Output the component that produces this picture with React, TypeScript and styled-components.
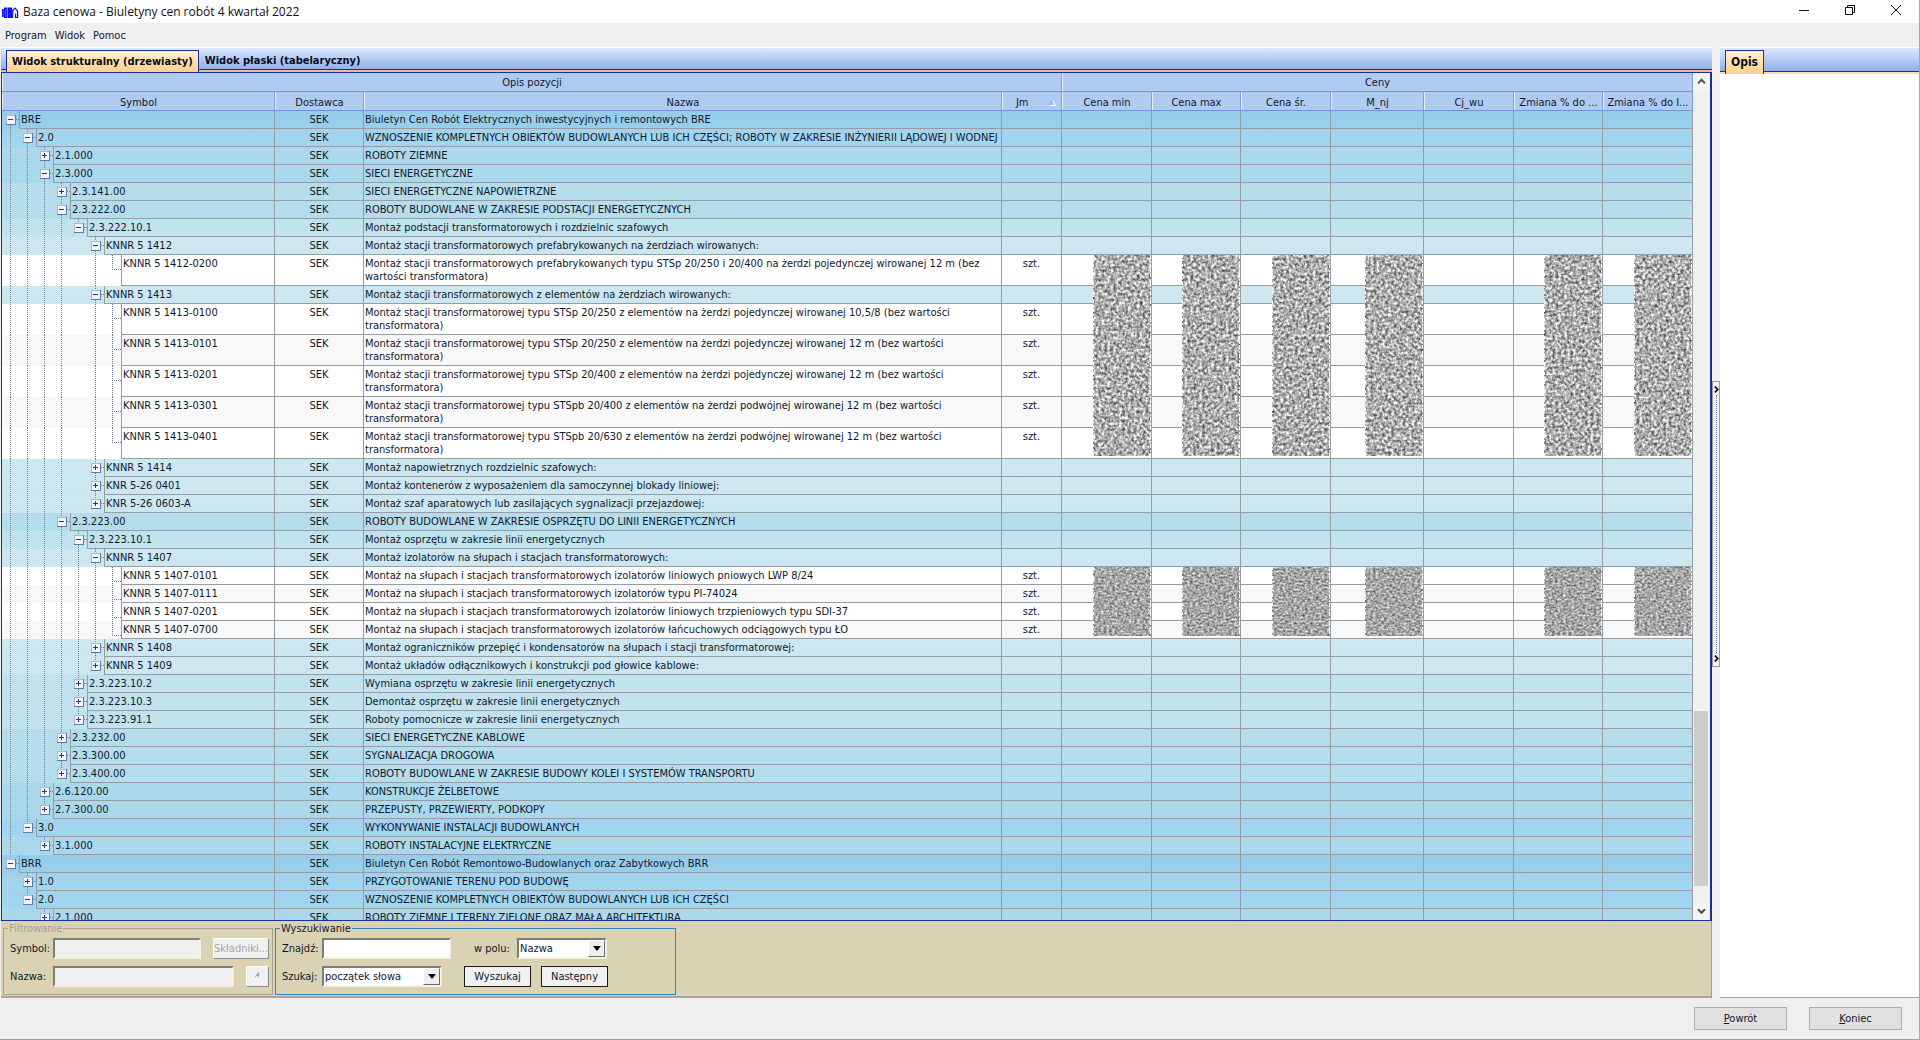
import React from 'react';
import styled, { createGlobalStyle } from 'styled-components';

const GlobalStyle = createGlobalStyle`
  *, *::before, *::after { box-sizing: border-box; }
  html, body { margin: 0; padding: 0; }
  body, button, input, select {
    font-family: 'DejaVu Sans Condensed', 'DejaVu Sans', sans-serif;
    font-size: 11px;
    line-height: 13px;
    color: #10182c;
  }
`;

const NAVY = '#1c2f94';
const GRID = '#949ca4';

/* ---------- window frame ---------- */

const Window = styled.div`
  display: flex;
  flex-direction: column;
  height: 100vh;
  overflow: hidden;
  background: #efefef;
  border-right: 1px solid #a8a8a8;
  border-bottom: 1px solid #a0a0a0;
`;

const TitleBar = styled.header`
  display: flex;
  align-items: center;
  height: 23px;
  padding-left: 2px;
  background: #fff;
`;

const Title = styled.h1`
  flex: 1;
  margin: 0 0 0 4px;
  font: 400 12px/16px 'Open Sans', sans-serif;
  color: #111;
`;

const WindowButton = styled.button`
  display: flex;
  align-items: center;
  justify-content: center;
  width: 46px;
  height: 23px;
  padding: 0 0 3px;
  border: 0;
  background: none;
`;

const MenuBar = styled.nav`
  display: flex;
  gap: 8px;
  height: 24px;
  padding: 6px 5px 0;
`;

const MenuItem = styled.button`
  height: 13px;
  padding: 0;
  border: 0;
  background: none;
`;

const Body = styled.main`
  display: flex;
  flex: 1;
  min-height: 0;
`;

const LeftPane = styled.section`
  display: flex;
  flex: 1;
  flex-direction: column;
  min-width: 0;
  margin-left: 1px;
`;

const RightPane = styled.aside`
  display: flex;
  flex-direction: column;
  width: 199px;
  border-bottom: 1px solid #a0a0a0;
  background: #fff;
`;

/* ---------- tabs ---------- */

const TabStrip = styled.div<{ $height: number; $band: string }>`
  display: flex;
  align-items: flex-end;
  height: ${(p) => p.$height}px;
  padding-left: 5px;
  border-top: 1px solid #fff;
  background: linear-gradient(#dce9fd, #85a8e6);
  box-shadow: inset 0 -2px 0 ${(p) => p.$band}, inset 0 -3px 0 ${NAVY};
`;

const Tab = styled.button<{ $active?: boolean; $large?: boolean }>`
  height: ${(p) => (p.$active ? 'calc(100% - 2px)' : '100%')};
  padding: 0 5px;
  border: 1px solid ${(p) => (p.$active ? NAVY : 'transparent')};
  border-bottom: 0;
  background: ${(p) => (p.$active ? 'linear-gradient(#fff1cf, #fdd08a)' : 'none')};
  font-size: ${(p) => (p.$large ? 12 : 11)}px;
  font-weight: 700;
  line-height: 15px;
  color: #0a0a18;
`;

/* ---------- price table ---------- */

const GridFrame = styled.div`
  display: flex;
  flex: 1;
  min-height: 0;
  border: 1px solid ${NAVY};
  border-right-width: 2px;
`;

const GridView = styled.div`
  flex: 1;
  min-width: 0;
  overflow: hidden;
`;

const Table = styled.table`
  width: 100%;
  border-spacing: 0;
  table-layout: fixed;
`;

const Col = styled.col<{ $width?: number }>`
  width: ${(p) => (p.$width ? `${p.$width}px` : 'auto')};
`;

const Th = styled.th`
  height: 19px;
  padding: 3px 2px 0;
  border-bottom: 1px solid #6f94da;
  background: #afcbf1;
  box-shadow: inset -1px 0 0 #7f9fdc, inset 1px 0 0 #e6effc;
  font-weight: 400;
  white-space: nowrap;

  &[colspan] { padding-top: 1px; }
`;

const SortHead = styled.span`
  display: flex;
  align-items: center;
  justify-content: space-between;
  padding: 0 4px 0 12px;
`;

const levelFill = [
  'linear-gradient(#94cceb, #98d0ea)',
  'linear-gradient(#a5d2ea, #9fd6f0 60%)',
  'linear-gradient(#aed8ea, #a8d8ed)',
  'linear-gradient(#b7dcec, #b2deec)',
  'linear-gradient(#bfe2ee, #c2e4ee)',
  'linear-gradient(#cde8f0, #cbe6ef)',
];

const Row = styled.tr<{ $level: number; $alt?: boolean }>`
  background: ${(p) => (p.$level < 6 ? levelFill[p.$level] : p.$alt ? '#f8f8f8' : '#fff')};
`;

const Td = styled.td<{ $align?: string }>`
  position: relative;
  height: 18px;
  padding: 2px 1px;
  border-right: 1px solid ${GRID};
  border-bottom: 1px solid ${GRID};
  text-align: ${(p) => p.$align ?? 'left'};
  vertical-align: top;
  white-space: pre-line;
`;

const SymbolTd = styled.td`
  height: 18px;
  padding: 0;
  border-right: 1px solid ${GRID};
`;

const SymbolLine = styled.div`
  display: flex;
  height: 100%;
`;

const Indent = styled.span<{ $level: number }>`
  position: relative;
  width: ${(p) => 17 + 17 * p.$level}px;
`;

const BranchSvg = styled.svg`
  position: absolute;
  inset: 0;
  width: 100%;
  height: 100%;
`;

const SymbolText = styled.span`
  flex: 1;
  padding: 2px 1px;
  border-left: 1px solid ${GRID};
  border-bottom: 1px solid ${GRID};
`;

const NoiseSvg = styled.svg`
  position: absolute;
  z-index: 1;
  top: 0;
  right: 0;
`;

const ScrollBar = styled.div`
  display: flex;
  flex-direction: column;
  width: 17px;
  background: #f0f0f0;
`;

const ScrollArrow = styled.button`
  display: flex;
  align-items: center;
  justify-content: center;
  width: 17px;
  height: 17px;
  padding: 0;
  border: 0;
  background: #f4f4f4;
`;

const ScrollTrack = styled.div`
  display: flex;
  flex: 1;
  flex-direction: column;
  justify-content: flex-end;
  padding: 0 2px 17px 1px;
`;

const ScrollThumb = styled.div`
  height: 22%;
  background: #cdcdcd;
`;

/* ---------- splitter ---------- */

const Splitter = styled.div`
  display: flex;
  flex-direction: column;
  width: 8px;
  padding: 334px 0 331px;
`;

const SplitterGrip = styled.button`
  display: flex;
  flex: 1;
  flex-direction: column;
  align-items: center;
  justify-content: space-between;
  width: 8px;
  padding: 4px 0;
  border: 1px solid #9a9a9a;
  background: #f4f6fa;
`;

const GripDots = styled.span`
  flex: 1;
  margin: 2px 0;
  border-left: 1px dotted #5a78b4;
`;

/* ---------- search panel ---------- */

const SearchPanel = styled.form`
  display: flex;
  gap: 2px;
  height: 77px;
  padding: 1px 0 1px 2px;
  border-right: 1px solid #a0a0a0;
  border-bottom: 2px solid #a6a6a2;
  background: #dad3b3;
`;

const Group = styled.fieldset<{ $line: string; $width: number }>`
  display: flex;
  flex-direction: column;
  gap: 7px;
  width: ${(p) => p.$width}px;
  min-width: 0;
  margin: 0;
  padding: 3px 3px 6px 6px;
  border: 1px solid ${(p) => p.$line};
`;

const Legend = styled.legend<{ $muted?: boolean }>`
  margin-left: -2px;
  padding: 0 1px;
  color: ${(p) => (p.$muted ? '#a5a08c' : '#10182c')};
`;

const FieldRow = styled.div`
  display: flex;
  align-items: center;
  height: 21px;
`;

const Label = styled.label<{ $width: number }>`
  width: ${(p) => p.$width}px;
  white-space: nowrap;
`;

const Input = styled.input<{ $width?: number }>`
  flex: ${(p) => (p.$width ? 'none' : 1)};
  width: ${(p) => (p.$width ? `${p.$width}px` : 'auto')};
  min-width: 0;
  height: 21px;
  padding: 1px 3px;
  border: 2px solid;
  border-color: #7c7c78 #f4f1e2 #f4f1e2 #7c7c78;
  background: #fff;

  &:disabled { background: #efefef; }
`;

const SelectBox = styled.span<{ $width: number }>`
  position: relative;
  display: flex;
  width: ${(p) => p.$width}px;
  height: 21px;
`;

const Select = styled.select`
  width: 100%;
  padding: 0 18px 0 1px;
  border: 2px solid;
  border-color: #7c7c78 #f4f1e2 #f4f1e2 #7c7c78;
  border-radius: 0;
  background: #fff;
  appearance: none;
`;

const DropMark = styled.span`
  position: absolute;
  top: 2px;
  right: 2px;
  display: flex;
  align-items: center;
  justify-content: center;
  width: 17px;
  height: 17px;
  border: 1px solid;
  border-color: #fff #6e6e6e #6e6e6e #fff;
  background: #efefef;
  pointer-events: none;
`;

const RaisedButton = styled.button<{ $width: number; $framed?: boolean }>`
  width: ${(p) => p.$width}px;
  height: 21px;
  margin-left: ${(p) => (p.$framed ? 10 : 12)}px;
  padding: 0;
  border: 1px solid;
  border-color: ${(p) => (p.$framed ? '#1c1c1c' : '#fff #8a8a86 #8a8a86 #fff')};
  background: #f0f0f0;

  &:disabled { color: #a6a6a6; }
`;

const Spacer = styled.span<{ $width: number }>`
  width: ${(p) => p.$width}px;
`;

const Footer = styled.footer`
  display: flex;
  justify-content: flex-end;
  gap: 22px;
  height: 41px;
  padding: 9px 17px 0 0;
`;

const FooterButton = styled.button`
  width: 93px;
  height: 23px;
  border: 1px solid #adadad;
  background: #e1e1e1;
`;

/* ---------- data ---------- */

type Node = { level: number; symbol: string; name: string; open?: boolean; alt?: boolean; mask?: number };

const L = (symbol: string, name: string, alt = false, mask?: number): Node => ({ level: 6, symbol, name, alt, mask });
const N = (level: number, symbol: string, name: string, open = false): Node => ({ level, symbol, name, open });

const rows: Node[] = [
  N(0, 'BRE', 'Biuletyn Cen Robót Elektrycznych inwestycyjnych i remontowych BRE', true),
  N(1, '2.0', 'WZNOSZENIE KOMPLETNYCH OBIEKTÓW BUDOWLANYCH LUB ICH CZĘŚCI; ROBOTY W ZAKRESIE INŻYNIERII LĄDOWEJ I WODNEJ', true),
  N(2, '2.1.000', 'ROBOTY ZIEMNE'),
  N(2, '2.3.000', 'SIECI ENERGETYCZNE', true),
  N(3, '2.3.141.00', 'SIECI ENERGETYCZNE NAPOWIETRZNE'),
  N(3, '2.3.222.00', 'ROBOTY BUDOWLANE W ZAKRESIE PODSTACJI ENERGETYCZNYCH', true),
  N(4, '2.3.222.10.1', 'Montaż podstacji transformatorowych i rozdzielnic szafowych', true),
  N(5, 'KNNR 5 1412', 'Montaż stacji transformatorowych prefabrykowanych na żerdziach wirowanych:', true),
  L('KNNR 5 1412-0200', 'Montaż stacji transformatorowych prefabrykowanych typu STSp 20/250 i 20/400 na żerdzi pojedynczej wirowanej 12 m (bez\nwartości transformatora)', false, 201),
  N(5, 'KNNR 5 1413', 'Montaż stacji transformatorowych z elementów na żerdziach wirowanych:', true),
  L('KNNR 5 1413-0100', 'Montaż stacji transformatorowej typu STSp 20/250 z elementów na żerdzi pojedynczej wirowanej 10,5/8 (bez wartości\ntransformatora)'),
  L('KNNR 5 1413-0101', 'Montaż stacji transformatorowej typu STSp 20/250 z elementów na żerdzi pojedynczej wirowanej 12 m (bez wartości\ntransformatora)', true),
  L('KNNR 5 1413-0201', 'Montaż stacji transformatorowej typu STSp 20/400 z elementów na żerdzi pojedynczej wirowanej 12 m (bez wartości\ntransformatora)'),
  L('KNNR 5 1413-0301', 'Montaż stacji transformatorowej typu STSpb 20/400 z elementów na żerdzi podwójnej wirowanej 12 m (bez wartości\ntransformatora)', true),
  L('KNNR 5 1413-0401', 'Montaż stacji transformatorowej typu STSpb 20/630 z elementów na żerdzi podwójnej wirowanej 12 m (bez wartości\ntransformatora)'),
  N(5, 'KNNR 5 1414', 'Montaż napowietrznych rozdzielnic szafowych:'),
  N(5, 'KNR 5-26 0401', 'Montaż kontenerów z wyposażeniem dla samoczynnej blokady liniowej:'),
  N(5, 'KNR 5-26 0603-A', 'Montaż szaf aparatowych lub zasilających sygnalizacji przejazdowej:'),
  N(3, '2.3.223.00', 'ROBOTY BUDOWLANE W ZAKRESIE OSPRZĘTU DO LINII ENERGETYCZNYCH', true),
  N(4, '2.3.223.10.1', 'Montaż osprzętu w zakresie linii energetycznych', true),
  N(5, 'KNNR 5 1407', 'Montaż izolatorów na słupach i stacjach transformatorowych:', true),
  L('KNNR 5 1407-0101', 'Montaż na słupach i stacjach transformatorowych izolatorów liniowych pniowych LWP 8/24', false, 69),
  L('KNNR 5 1407-0111', 'Montaż na słupach i stacjach transformatorowych izolatorów typu PI-74024', true),
  L('KNNR 5 1407-0201', 'Montaż na słupach i stacjach transformatorowych izolatorów liniowych trzpieniowych typu SDI-37'),
  L('KNNR 5 1407-0700', 'Montaż na słupach i stacjach transformatorowych izolatorów łańcuchowych odciągowych typu ŁO', true),
  N(5, 'KNNR 5 1408', 'Montaż ograniczników przepięć i kondensatorów na słupach i stacji transformatorowej:'),
  N(5, 'KNNR 5 1409', 'Montaż układów odłącznikowych i konstrukcji pod głowice kablowe:'),
  N(4, '2.3.223.10.2', 'Wymiana osprzętu w zakresie linii energetycznych'),
  N(4, '2.3.223.10.3', 'Demontaż osprzętu w zakresie linii energetycznych'),
  N(4, '2.3.223.91.1', 'Roboty pomocnicze w zakresie linii energetycznych'),
  N(3, '2.3.232.00', 'SIECI ENERGETYCZNE KABLOWE'),
  N(3, '2.3.300.00', 'SYGNALIZACJA DROGOWA'),
  N(3, '2.3.400.00', 'ROBOTY BUDOWLANE W ZAKRESIE BUDOWY KOLEI I SYSTEMÓW TRANSPORTU'),
  N(2, '2.6.120.00', 'KONSTRUKCJE ŻELBETOWE'),
  N(2, '2.7.300.00', 'PRZEPUSTY, PRZEWIERTY, PODKOPY'),
  N(1, '3.0', 'WYKONYWANIE INSTALACJI BUDOWLANYCH', true),
  N(2, '3.1.000', 'ROBOTY INSTALACYJNE ELEKTRYCZNE'),
  N(0, 'BRR', 'Biuletyn Cen Robót Remontowo-Budowlanych oraz Zabytkowych BRR', true),
  N(1, '1.0', 'PRZYGOTOWANIE TERENU POD BUDOWĘ'),
  N(1, '2.0', 'WZNOSZENIE KOMPLETNYCH OBIEKTÓW BUDOWLANYCH LUB ICH CZĘŚCI', true),
  N(2, '2.1.000', 'ROBOTY ZIEMNE I TERENY ZIELONE ORAZ MAŁA ARCHITEKTURA'),
];

const columns: (number | undefined)[] = [273, 89, undefined, 60, 90, 89, 90, 93, 90, 89, 90];
const priceHeads = ['Cena min', 'Cena max', 'Cena śr.', 'M_nj', 'Cj_wu', 'Zmiana % do ...', 'Zmiana % do I...'];

/** True when a later sibling exists at `level` under the same parent. */
function continues(index: number, level: number): boolean {
  for (let i = index + 1; i < rows.length; i += 1) {
    if (rows[i].level < level) return false;
    if (rows[i].level === level) return true;
  }
  return false;
}

function Branches({ index }: { index: number }) {
  const { level, open } = rows[index];
  const mid = 8 + 17 * level;
  const guides = Array.from({ length: level }, (_, k) => k).filter((k) => continues(index, k));
  const dots = { stroke: '#6d8295', strokeDasharray: '1 1' };
  const end = 17 + 17 * level;
  const elbow = level === 6 ? 14.5 : 8.5;
  return (
    <Indent $level={level}>
      <BranchSvg shapeRendering="crispEdges" aria-hidden="true">
        {guides.map((k) => (
          <line key={k} x1={8.5 + 17 * k} x2={8.5 + 17 * k} y1="0" y2="100%" {...dots} />
        ))}
        {level > 0 && <line x1={mid + 0.5} x2={mid + 0.5} y1="0" y2={elbow} {...dots} />}
        {continues(index, level) && <line x1={mid + 0.5} x2={mid + 0.5} y1="10" y2="100%" {...dots} />}
        <line x1={mid} x2={end} y1={elbow} y2={elbow} {...dots} />
        {level < 6 && (
          <g>
            <rect x={mid - 4} y="4" width="10" height="10" fill="#5f7ba6" />
            <rect x={mid - 4} y="4" width="9" height="9" fill="#a9b9d6" />
            <rect x={mid - 3} y="5" width="8" height="8" fill="#f3f5fb" />
            <rect x={mid - 2} y="8" width="5" height="1" fill="#33356b" />
            {!open && <rect x={mid} y="6" width="1" height="5" fill="#33356b" />}
          </g>
        )}
      </BranchSvg>
    </Indent>
  );
}

function Noise({ height, seed }: { height: number; seed: number }) {
  const coarse = height > 100;
  const id = `noise-${height}-${seed}`;
  return (
    <NoiseSvg width="58" height={height} aria-hidden="true">
      <filter id={id} x="0" y="0" width="100%" height="100%" colorInterpolationFilters="sRGB">
        <feTurbulence type="fractalNoise" baseFrequency={coarse ? '0.34' : '0.36 0.5'} numOctaves={2} seed={seed} />
        <feColorMatrix
          values={
            coarse
              ? '1.2 0 0 0 0.08  1.2 0 0 0 0.08  1.2 0 0 0 0.08  0 0 0 0 1'
              : '0.9 0 0 0 0.2  0.9 0 0 0 0.2  0.9 0 0 0 0.2  0 0 0 0 1'
          }
        />
      </filter>
      <rect width="58" height={height} filter={`url(#${id})`} />
      <line x1="0.5" x2="0.5" y1="0" y2={height} stroke="#fff" strokeDasharray="3 2 1 3" />
      <line x1="57.5" x2="57.5" y1="0" y2={height} stroke="#fff" strokeDasharray="4 2 2 1" />
    </NoiseSvg>
  );
}

function PriceRow({ index }: { index: number }) {
  const row = rows[index];
  return (
    <Row $level={row.level} $alt={row.alt}>
      <SymbolTd>
        <SymbolLine>
          <Branches index={index} />
          <SymbolText>{row.symbol}</SymbolText>
        </SymbolLine>
      </SymbolTd>
      <Td $align="center">SEK</Td>
      <Td>{row.name}</Td>
      <Td $align="center">{row.level === 6 ? 'szt.' : ''}</Td>
      {priceHeads.map((head, i) => (
        <Td key={head}>{row.mask && i !== 4 ? <Noise height={row.mask} seed={i + 3} /> : null}</Td>
      ))}
    </Row>
  );
}

function Chevron({ down }: { down?: boolean }) {
  return (
    <svg width="9" height="7" viewBox="0 0 9 7" fill="none" stroke="#505050" strokeWidth="2" aria-hidden="true">
      <path d={down ? 'M1 1.2 4.5 4.8 8 1.2' : 'M1 5.4 4.5 1.8 8 5.4'} />
    </svg>
  );
}

function DropArrow() {
  return (
    <DropMark>
      <svg width="8" height="5" viewBox="0 0 8 5" aria-hidden="true"><path d="M0 0h8L4 5z" fill="#000" /></svg>
    </DropMark>
  );
}

function GripArrow() {
  return (
    <svg width="5" height="7" viewBox="0 0 5 7" fill="none" stroke="#000" strokeWidth="1.6" aria-hidden="true">
      <path d="M.8.6 3.8 3.5.8 6.4" />
    </svg>
  );
}

export default function App() {
  return (
    <>
      <GlobalStyle />
      <Window>
        <TitleBar>
          <svg width="17" height="23" viewBox="0 0 17 23" aria-hidden="true">
            <path d="M0 9h2V7.500h3.500V18H2v-1H0z" fill="#0a10f0" />
            <path d="M6 7.500h4V18H6z" fill="#0a10f0" />
            <path d="M1.600 9.500v7M3.700 9v8" stroke="#a4aaff" strokeWidth="0.500" />
            <path d="M10.700 18v-7.500l2.300-2.300 2.600 2.800v6.500h-2v-4" fill="#fff" stroke="#0a10f0" strokeWidth="1.200" />
          </svg>
          <Title>Baza cenowa - Biuletyny cen robót 4 kwartał 2022</Title>
          <WindowButton aria-label="Minimalizuj">
            <svg width="10" height="10" stroke="#111"><path d="M0 5.500h10" /></svg>
          </WindowButton>
          <WindowButton aria-label="Przywróć">
            <svg width="10" height="10" stroke="#111" fill="none"><path d="M.5 2.500h7v7h-7zM2.500 2.500v-2h7v7h-2" /></svg>
          </WindowButton>
          <WindowButton aria-label="Zamknij">
            <svg width="10" height="10" stroke="#111"><path d="M0 0 10 10M10 0 0 10" /></svg>
          </WindowButton>
        </TitleBar>
        <MenuBar>
          <MenuItem>Program</MenuItem>
          <MenuItem>Widok</MenuItem>
          <MenuItem>Pomoc</MenuItem>
        </MenuBar>
        <Body>
          <LeftPane>
            <TabStrip $height={25} $band="#e6bb95">
              <Tab $active>Widok strukturalny (drzewiasty)</Tab>
              <Tab>Widok płaski (tabelaryczny)</Tab>
            </TabStrip>
            <GridFrame>
              <GridView>
                <Table>
                  <colgroup>
                    {columns.map((width, i) => <Col key={i} $width={width} />)}
                  </colgroup>
                  <thead>
                    <tr>
                      <Th colSpan={4}>Opis pozycji</Th>
                      <Th colSpan={7}>Ceny</Th>
                    </tr>
                    <tr>
                      <Th>Symbol</Th>
                      <Th>Dostawca</Th>
                      <Th>Nazwa</Th>
                      <Th>
                        <SortHead>
                          Jm
                          <svg width="7" height="7" viewBox="0 0 7 7" fill="none" aria-hidden="true">
                            <path d="M.5 6.500 3.500.5" stroke="#7f9fdc" />
                            <path d="M3.500.5 6.500 6.500H.5" stroke="#fff" />
                          </svg>
                        </SortHead>
                      </Th>
                      {priceHeads.map((head) => <Th key={head}>{head}</Th>)}
                    </tr>
                  </thead>
                  <tbody>
                    {rows.map((_, i) => <PriceRow key={i} index={i} />)}
                  </tbody>
                </Table>
              </GridView>
              <ScrollBar>
                <ScrollArrow aria-label="W górę"><Chevron /></ScrollArrow>
                <ScrollTrack><ScrollThumb /></ScrollTrack>
                <ScrollArrow aria-label="W dół"><Chevron down /></ScrollArrow>
              </ScrollBar>
            </GridFrame>
            <SearchPanel>
              <Group $line="#a9a48e" $width={270} disabled>
                <Legend $muted>Filtrowanie</Legend>
                <FieldRow>
                  <Label $width={43} htmlFor="f-symbol">Symbol:</Label>
                  <Input id="f-symbol" />
                  <RaisedButton type="button" $width={56}>Składniki...</RaisedButton>
                </FieldRow>
                <FieldRow>
                  <Label $width={43} htmlFor="f-name">Nazwa:</Label>
                  <Input id="f-name" />
                  <RaisedButton type="button" $width={23} aria-label="Wielkość liter">
                    <svg width="7" height="8" viewBox="0 0 7 8" fill="none" stroke="#a0a0a0" aria-hidden="true">
                      <path d="M1 5.500 4.500.5v5M2 3.500h3" />
                    </svg>
                  </RaisedButton>
                </FieldRow>
              </Group>
              <Group $line="#2f87c4" $width={401}>
                <Legend>Wyszukiwanie</Legend>
                <FieldRow>
                  <Label $width={40} htmlFor="s-find">Znajdź:</Label>
                  <Input id="s-find" $width={129} />
                  <Spacer $width={23} />
                  <Label $width={43} htmlFor="s-field">w polu:</Label>
                  <SelectBox $width={90}>
                    <Select id="s-field"><option>Nazwa</option></Select>
                    <DropArrow />
                  </SelectBox>
                </FieldRow>
                <FieldRow>
                  <Label $width={40} htmlFor="s-mode">Szukaj:</Label>
                  <SelectBox $width={120}>
                    <Select id="s-mode"><option>początek słowa</option></Select>
                    <DropArrow />
                  </SelectBox>
                  <Spacer $width={12} />
                  <RaisedButton type="button" $width={67} $framed>Wyszukaj</RaisedButton>
                  <RaisedButton type="button" $width={67} $framed>Następny</RaisedButton>
                </FieldRow>
              </Group>
            </SearchPanel>
          </LeftPane>
          <Splitter>
            <SplitterGrip aria-label="Zwiń panel opisu">
              <GripArrow />
              <GripDots />
              <GripArrow />
            </SplitterGrip>
          </Splitter>
          <RightPane>
            <TabStrip $height={27} $band="#fbdcb4">
              <Tab $active $large>Opis</Tab>
            </TabStrip>
          </RightPane>
        </Body>
        <Footer>
          <FooterButton><u>P</u>owrót</FooterButton>
          <FooterButton><u>K</u>oniec</FooterButton>
        </Footer>
      </Window>
    </>
  );
}
